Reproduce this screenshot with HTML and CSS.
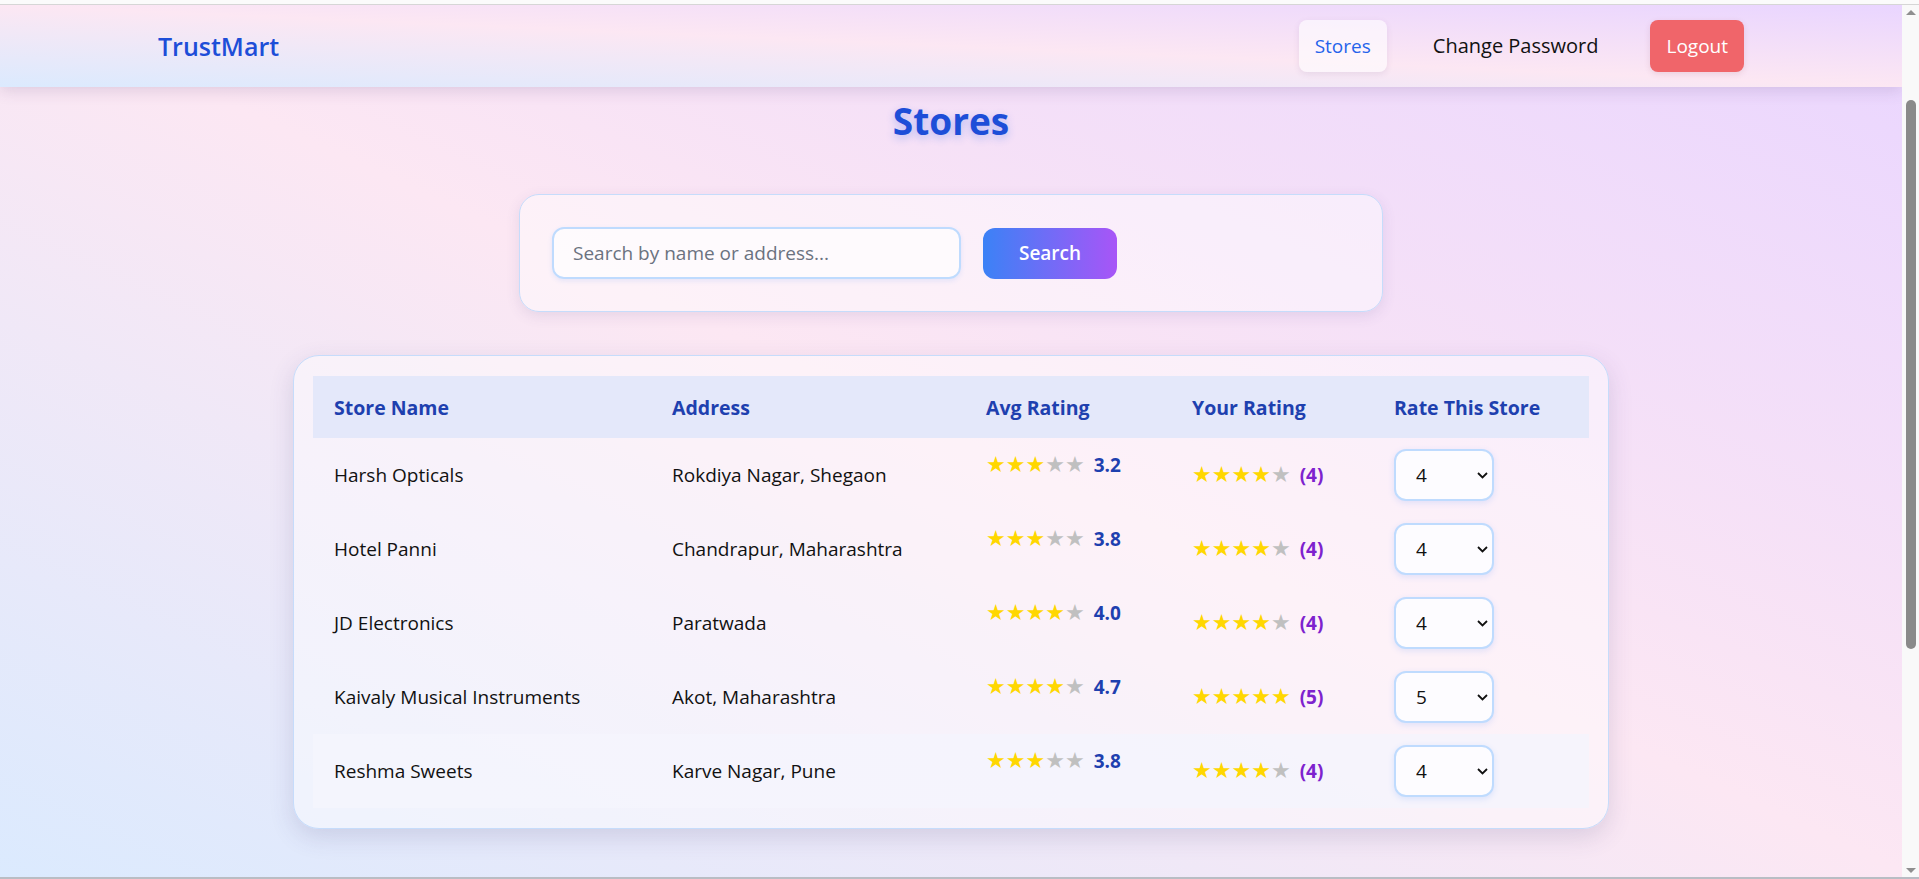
FILE: index.html
```html
<!DOCTYPE html>
<html lang="en">
<head>
<meta charset="utf-8">
<title>TrustMart - Stores</title>
<link rel="stylesheet" href="styles.css">
</head>
<body>
<div class="window-edge"></div>
<div class="viewport">
  <div class="app">
    <header class="navbar">
      <div class="nav-inner">
        <a class="brand" href="#">TrustMart</a>
        <nav class="nav-links">
          <a class="nav-link active" href="#">Stores</a>
          <a class="nav-link" href="#">Change Password</a>
          <button class="logout" type="button">Logout</button>
        </nav>
      </div>
    </header>

    <main class="page">
      <h1 class="page-title">Stores</h1>

      <section class="search-card">
        <input class="search-input" type="text" placeholder="Search by name or address...">
        <button class="search-btn" type="button">Search</button>
      </section>

      <section class="table-card">
        <table class="stores-table">
          <colgroup>
            <col class="col-name">
            <col class="col-addr">
            <col class="col-avg">
            <col class="col-your">
            <col class="col-rate">
          </colgroup>
          <thead>
            <tr>
              <th>Store Name</th>
              <th>Address</th>
              <th>Avg Rating</th>
              <th>Your Rating</th>
              <th>Rate This Store</th>
            </tr>
          </thead>
          <tbody>
            <tr>
              <td>Harsh Opticals</td>
              <td>Rokdiya Nagar, Shegaon</td>
              <td><div class="avg"><span class="stars"><span class="on">★★★</span><span class="off">★★</span></span><span class="avg-num">3.2</span></div></td>
              <td><div class="yours"><span class="stars"><span class="on">★★★★</span><span class="off">★</span></span><span class="your-num">(4)</span></div></td>
              <td><div class="rate-select"><select><option>1</option><option>2</option><option>3</option><option selected>4</option><option>5</option></select><svg class="chev" viewBox="0 0 11 7"><polyline points="1,1 5.5,5.5 10,1" fill="none" stroke="#111" stroke-width="1.8"/></svg></div></td>
            </tr>
            <tr>
              <td>Hotel Panni</td>
              <td>Chandrapur, Maharashtra</td>
              <td><div class="avg"><span class="stars"><span class="on">★★★</span><span class="off">★★</span></span><span class="avg-num">3.8</span></div></td>
              <td><div class="yours"><span class="stars"><span class="on">★★★★</span><span class="off">★</span></span><span class="your-num">(4)</span></div></td>
              <td><div class="rate-select"><select><option>1</option><option>2</option><option>3</option><option selected>4</option><option>5</option></select><svg class="chev" viewBox="0 0 11 7"><polyline points="1,1 5.5,5.5 10,1" fill="none" stroke="#111" stroke-width="1.8"/></svg></div></td>
            </tr>
            <tr>
              <td>JD Electronics</td>
              <td>Paratwada</td>
              <td><div class="avg"><span class="stars"><span class="on">★★★★</span><span class="off">★</span></span><span class="avg-num">4.0</span></div></td>
              <td><div class="yours"><span class="stars"><span class="on">★★★★</span><span class="off">★</span></span><span class="your-num">(4)</span></div></td>
              <td><div class="rate-select"><select><option>1</option><option>2</option><option>3</option><option selected>4</option><option>5</option></select><svg class="chev" viewBox="0 0 11 7"><polyline points="1,1 5.5,5.5 10,1" fill="none" stroke="#111" stroke-width="1.8"/></svg></div></td>
            </tr>
            <tr>
              <td>Kaivaly Musical Instruments</td>
              <td>Akot, Maharashtra</td>
              <td><div class="avg"><span class="stars"><span class="on">★★★★</span><span class="off">★</span></span><span class="avg-num">4.7</span></div></td>
              <td><div class="yours"><span class="stars"><span class="on">★★★★★</span></span><span class="your-num">(5)</span></div></td>
              <td><div class="rate-select"><select><option>1</option><option>2</option><option>3</option><option>4</option><option selected>5</option></select><svg class="chev" viewBox="0 0 11 7"><polyline points="1,1 5.5,5.5 10,1" fill="none" stroke="#111" stroke-width="1.8"/></svg></div></td>
            </tr>
            <tr class="is-hover">
              <td>Reshma Sweets</td>
              <td>Karve Nagar, Pune</td>
              <td><div class="avg"><span class="stars"><span class="on">★★★</span><span class="off">★★</span></span><span class="avg-num">3.8</span></div></td>
              <td><div class="yours"><span class="stars"><span class="on">★★★★</span><span class="off">★</span></span><span class="your-num">(4)</span></div></td>
              <td><div class="rate-select"><select><option>1</option><option>2</option><option>3</option><option selected>4</option><option>5</option></select><svg class="chev" viewBox="0 0 11 7"><polyline points="1,1 5.5,5.5 10,1" fill="none" stroke="#111" stroke-width="1.8"/></svg></div></td>
            </tr>
          </tbody>
        </table>
      </section>
    </main>
  </div>

  <div class="scrollbar" aria-hidden="true">
    <span class="sb-arrow sb-up"></span>
    <div class="sb-track"><div class="sb-thumb"></div></div>
    <span class="sb-arrow sb-down"></span>
  </div>
</div>
<div class="window-bottom"></div>
</body>
</html>
```
FILE: styles.css
```css
html {
  background: linear-gradient(to top right, #dbeafe 0%, #fce7f3 50%, #e9d5ff 100%) fixed;
}

body {
  margin: 0;
  height: 100vh;
  overflow: hidden;
  display: flex;
  flex-direction: column;
  font-family: "Open Sans", "Noto Sans", sans-serif;
  color: #111;
}

.window-edge {
  flex: none;
  height: 4px;
  background: #fbfbfb;
  border-bottom: 1px solid #d6d6d6;
}

.window-bottom {
  flex: none;
  height: 2px;
  background: #b9bdc4;
}

.viewport {
  flex: 1;
  min-height: 0;
  display: flex;
}

.app {
  flex: 1;
  min-width: 0;
  overflow: hidden;
}

/* scrollbar drawn as the window's right column */
.scrollbar {
  flex: none;
  width: 17px;
  display: flex;
  flex-direction: column;
  align-items: center;
  background: #f9f9f9;
}

.sb-arrow {
  flex: none;
  width: 0;
  height: 0;
  border-left: 5px solid transparent;
  border-right: 5px solid transparent;
}

.sb-up {
  margin: 5px 0 7px;
  border-bottom: 5px solid #8f8f8f;
}

.sb-down {
  margin: 7px 0 4px;
  border-top: 5px solid #8f8f8f;
}

.sb-track {
  flex: 1;
  width: 100%;
  display: flex;
  justify-content: center;
}

.sb-thumb {
  width: 10px;
  height: 549px;
  margin-top: 78px;
  border-radius: 5px;
  background: #8a8a8a;
}

.navbar {
  position: relative;
  z-index: 2;
  height: 82px;
  background: linear-gradient(to top right, #dbeafe 0%, #fce7f3 50%, #e9d5ff 100%);
  box-shadow: 0 4px 14px rgba(90, 60, 120, 0.16);
}

.nav-inner {
  max-width: 1586px;
  height: 100%;
  margin: 0 auto;
  display: flex;
  align-items: center;
  justify-content: space-between;
}

.brand {
  font-size: 25px;
  font-weight: 600;
  color: #1d4ed8;
  text-decoration: none;
}

.nav-links {
  display: flex;
  align-items: center;
}

.nav-link {
  display: block;
  height: 52px;
  line-height: 52px;
  padding: 0 15px;
  border-radius: 8px;
  font-size: 20px;
  font-weight: 500;
  color: #111;
  text-decoration: none;
}

.nav-link.active {
  padding: 0 16px;
  font-size: 19px;
  font-weight: 400;
  background: rgba(255, 255, 255, 0.6);
  color: #2563eb;
  box-shadow: 0 2px 6px rgba(80, 60, 120, 0.1);
}

.nav-link + .nav-link {
  margin-left: 31px;
}

.logout {
  margin-left: 37px;
  height: 52px;
  padding: 0 16px;
  border: none;
  border-radius: 8px;
  background: #f0656a;
  color: #fff;
  font-family: "Open Sans", "Noto Sans", sans-serif;
  font-size: 19px;
  box-shadow: 0 2px 6px rgba(120, 40, 60, 0.12);
}

.page {
  padding: 12px 0 0;
}

.page-title {
  margin: 0;
  font-size: 37px;
  line-height: 44px;
  font-weight: 700;
  color: #1d4ed8;
  text-align: center;
  text-shadow: 0 3px 8px rgba(37, 99, 235, 0.3);
}

.search-card {
  box-sizing: border-box;
  width: 864px;
  margin: 51px auto 0;
  padding: 32px;
  display: flex;
  align-items: center;
  gap: 22px;
  border: 1px solid #c6dcfb;
  border-radius: 20px;
  background: rgba(255, 255, 255, 0.45);
  box-shadow: 0 4px 14px rgba(80, 70, 140, 0.12);
}

.search-input {
  box-sizing: border-box;
  width: 409px;
  height: 52px;
  padding: 0 19px;
  border: 2px solid #bfdbfe;
  border-radius: 12px;
  background: rgba(255, 255, 255, 0.65);
  font-family: "Open Sans", "Noto Sans", sans-serif;
  font-size: 19px;
  color: #111;
  outline: none;
  box-shadow: 0 2px 5px rgba(59, 130, 246, 0.12);
}

.search-input::placeholder {
  color: #6b7280;
}

.search-btn {
  width: 134px;
  height: 51px;
  border: none;
  border-radius: 12px;
  background: linear-gradient(to right, #3b82f6, #a855f7);
  color: #fff;
  font-family: "Open Sans", "Noto Sans", sans-serif;
  font-size: 19px;
  font-weight: 600;
}

.table-card {
  box-sizing: border-box;
  width: 1316px;
  margin: 43px auto 0;
  padding: 20px 19px;
  border: 1px solid #c6dcfb;
  border-radius: 26px;
  background: rgba(255, 255, 255, 0.45);
  box-shadow: 0 8px 24px rgba(70, 60, 120, 0.16);
}

.stores-table {
  width: 1276px;
  table-layout: fixed;
  border-collapse: collapse;
}

.col-name { width: 338px; }
.col-addr { width: 314px; }
.col-avg { width: 206px; }
.col-your { width: 202px; }
.col-rate { width: 216px; }

.stores-table th {
  height: 62px;
  padding: 0 21px;
  background: #e4e8fa;
  color: #1e40af;
  font-size: 19.5px;
  font-weight: 700;
  text-align: left;
}

.stores-table td {
  padding: 11px 21px;
  font-size: 19px;
  vertical-align: middle;
  white-space: nowrap;
}

.stores-table tr.is-hover td {
  background: rgba(245, 244, 253, 0.85);
}

.avg,
.yours {
  display: flex;
  align-items: center;
}

.avg {
  padding-bottom: 21px;
}

.stars {
  font-family: "DejaVu Sans", sans-serif;
  font-size: 22px;
  line-height: 1;
}

.stars .on { color: #ffd700; }
.stars .off { color: #c0c0c0; }

.avg-num {
  margin-left: 9px;
  font-size: 19px;
  font-weight: 700;
  color: #1e40af;
}

.your-num {
  margin-left: 9px;
  font-size: 19px;
  font-weight: 700;
  color: #7e22ce;
}

.rate-select {
  position: relative;
  width: 100px;
}

.rate-select select {
  -webkit-appearance: none;
  appearance: none;
  box-sizing: border-box;
  width: 100px;
  height: 52px;
  padding: 0 0 0 20px;
  border: 2px solid #bfdbfe;
  border-radius: 12px;
  background: #fdfcff;
  font-family: "Open Sans", "Noto Sans", sans-serif;
  font-size: 19px;
  color: #111;
  box-shadow: 0 2px 6px rgba(59, 130, 246, 0.15);
}

.chev {
  position: absolute;
  right: 6px;
  top: 23px;
  width: 11px;
  height: 7px;
  pointer-events: none;
}
```
